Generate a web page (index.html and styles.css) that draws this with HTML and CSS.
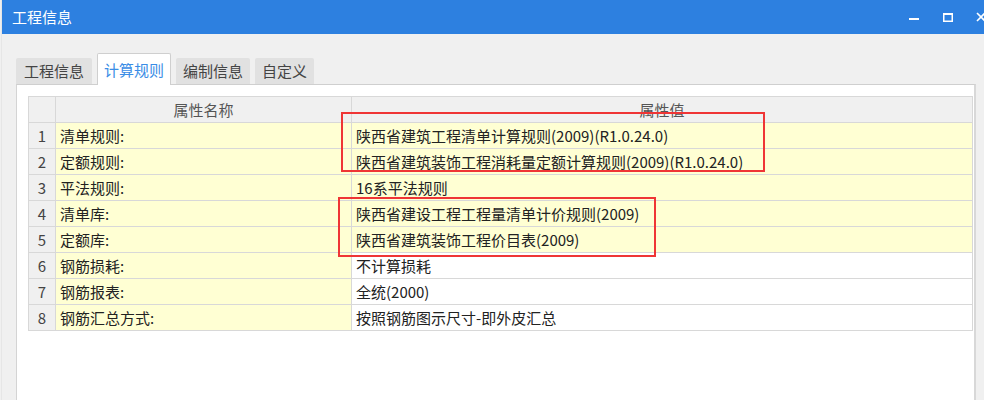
FILE: index.html
```html
<!DOCTYPE html>
<html lang="zh">
<head>
<meta charset="utf-8">
<title>工程信息</title>
<link rel="stylesheet" href="styles.css">
</head>
<body>
<div class="window">
  <div class="titlebar">
    <span class="title">工程信息</span>
    <div class="controls">
      <svg class="ctl" width="12" height="12" viewBox="0 0 12 12"><rect x="0" y="7" width="10" height="2" fill="#fff"/></svg>
      <svg class="ctl" width="12" height="12" viewBox="0 0 12 12"><rect x="1.75" y="2.75" width="8.5" height="7.5" fill="none" stroke="#fff" stroke-width="1.5"/><rect x="1" y="2" width="10" height="2" fill="#fff"/></svg>
      <svg class="ctl close" width="12" height="12" viewBox="0 0 12 12"><path d="M2 2 L10 10 M10 2 L2 10" stroke="#fff" stroke-width="1.6"/></svg>
    </div>
  </div>
  <div class="body">
    <div class="tabs">
      <div class="tab">工程信息</div>
      <div class="tab active">计算规则</div>
      <div class="tab">编制信息</div>
      <div class="tab">自定义</div>
    </div>
    <div class="panel">
      <table class="grid">
        <colgroup><col class="c-num"><col class="c-name"><col class="c-val"></colgroup>
        <thead>
          <tr><th class="num"></th><th>属性名称</th><th>属性值</th></tr>
        </thead>
        <tbody>
          <tr class="hl"><td class="num">1</td><td class="name">清单规则:</td><td class="val">陕西省建筑工程清单计算规则(2009)(R1.0.24.0)</td></tr>
          <tr class="hl"><td class="num">2</td><td class="name">定额规则:</td><td class="val">陕西省建筑装饰工程消耗量定额计算规则(2009)(R1.0.24.0)</td></tr>
          <tr class="hl"><td class="num">3</td><td class="name">平法规则:</td><td class="val">16系平法规则</td></tr>
          <tr class="hl"><td class="num">4</td><td class="name">清单库:</td><td class="val">陕西省建设工程工程量清单计价规则(2009)</td></tr>
          <tr class="hl"><td class="num">5</td><td class="name">定额库:</td><td class="val">陕西省建筑装饰工程价目表(2009)</td></tr>
          <tr><td class="num">6</td><td class="name">钢筋损耗:</td><td class="val">不计算损耗</td></tr>
          <tr><td class="num">7</td><td class="name">钢筋报表:</td><td class="val">全统(2000)</td></tr>
          <tr><td class="num">8</td><td class="name">钢筋汇总方式:</td><td class="val">按照钢筋图示尺寸-即外皮汇总</td></tr>
        </tbody>
      </table>
      <div class="mark mark-a"></div>
      <div class="mark mark-b"></div>
    </div>
  </div>
</div>
</body>
</html>
```
FILE: styles.css
```css
html, body {
  margin: 0;
  padding: 0;
}
body {
  width: 984px;
  height: 400px;
  overflow: hidden;
  background: #f0f0f0;
  font-family: "Noto Sans CJK SC", "Noto Sans", sans-serif;
  color: #222;
}
.window {
  margin-left: 1px;
  height: 400px;
  display: flex;
  flex-direction: column;
  border-left: 1px solid #e6e6e6;
}
.titlebar {
  height: 34px;
  background: #2d80e0;
  display: flex;
  align-items: center;
  justify-content: space-between;
  padding-left: 10px;
  flex: none;
}
.title {
  color: #fff;
  font-size: 15px;
  line-height: 20px;
}
.controls {
  display: flex;
  align-items: center;
  gap: 21px;
  margin-right: -3px;
}
.ctl {
  display: block;
}
.body {
  flex: 1;
  display: flex;
  flex-direction: column;
  padding: 19px 0 0 14px;
  min-height: 0;
}
.tabs {
  display: flex;
  align-items: flex-end;
  gap: 5px;
  height: 31px;
  position: relative;
  z-index: 1;
  flex: none;
}
.tab {
  height: 26px;
  padding: 0;
  background: #e1e1e1;
  border-radius: 2px 2px 0 0;
  font-size: 15px;
  line-height: 26px;
  color: #444;
  box-sizing: border-box;
  text-align: center;
}
.tab:nth-child(1) { width: 76px; }
.tab:nth-child(3) { width: 74px; }
.tab:nth-child(4) { width: 59px; }
.tab.active {
  height: 32px;
  margin-bottom: -1px;
  background: #fff;
  color: #3a8de6;
  border: 1px solid #cfcfcf;
  border-bottom: none;
  line-height: 31px;
  width: 74px;
}
.panel {
  flex: 1;
  position: relative;
  background: #fff;
  border-top: 1px solid #cfcfcf;
  border-left: 1px solid #d4d4d4;
  border-right: 2px solid #d8d8d8;
  width: 960px;
  box-sizing: border-box;
  padding: 11px 0 0 11px;
}
.grid {
  border-collapse: collapse;
  table-layout: fixed;
  width: 944px;
  font-size: 15px;
}
.c-num { width: 27px; }
.c-name { width: 296px; }
.c-val { width: 621px; }
.grid th, .grid td {
  border: 1px solid #d8d8d8;
  height: 25px;
  padding: 0;
  line-height: 24px;
  white-space: nowrap;
  overflow: hidden;
}
.grid th {
  background: #f0f0f0;
  font-weight: normal;
  color: #555;
  text-align: center;
}
.grid td.num {
  background: #f0f0f0;
  text-align: center;
  color: #444;
  font-size: 15px;
}
.grid td.name {
  background: #ffffd3;
  padding-left: 4px;
}
.grid td.val {
  background: #fff;
  padding-left: 4px;
}
.grid tr.hl td.val {
  background: #ffffd3;
}
.mark {
  position: absolute;
  border: 2px solid #ef3535;
  box-sizing: border-box;
}
.mark-a {
  left: 324px;
  top: 27px;
  width: 424px;
  height: 60px;
}
.mark-b {
  left: 321px;
  top: 112px;
  width: 318px;
  height: 60px;
}
```
